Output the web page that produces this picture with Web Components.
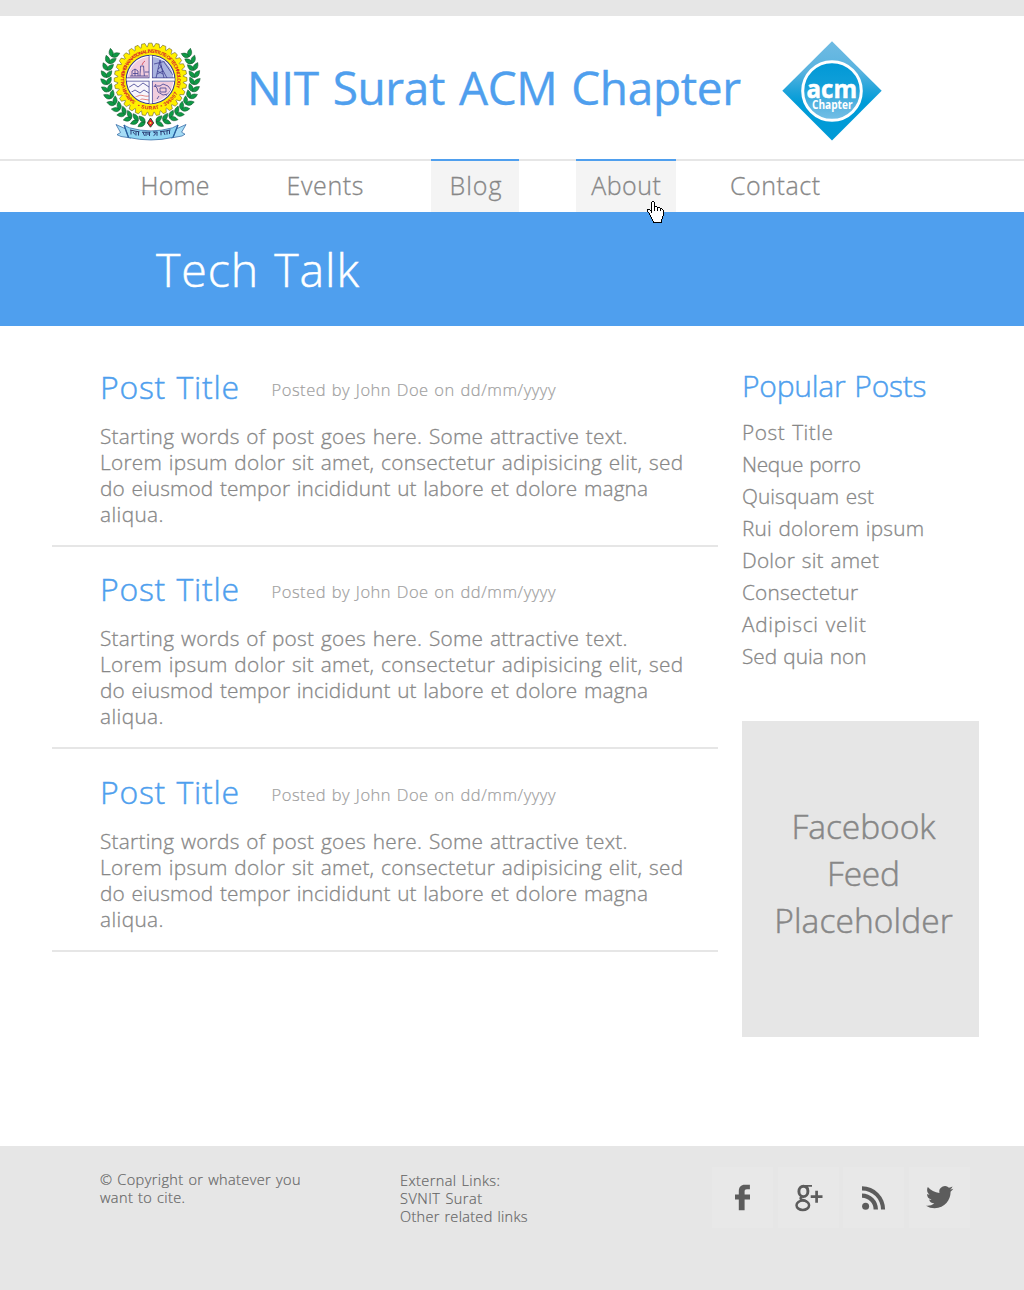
<!DOCTYPE html>
<html lang="en">
<head>
<meta charset="utf-8">
<title>NIT Surat ACM Chapter</title>
<style>
body{margin:0;background:#fff;font-family:"Open Sans","Noto Sans",sans-serif;font-weight:300;color:#878787}
</style>
</head>
<body>
<chapter-page></chapter-page>
<script>
// One line of text, tracked so that it fills the measure given in "w".
class FitLine extends HTMLElement{
  connectedCallback(){
    const a=n=>parseFloat(this.getAttribute(n));
    const root=this.attachShadow({mode:'open'});
    root.innerHTML=`<style>:host{display:block;flex:none;white-space:nowrap;width:${a('w')}px;height:${a('l')}px;line-height:${a('l')}px;font-size:${a('s')}px}
      span{display:inline-block;line-height:inherit;word-spacing:.05em;-webkit-text-stroke:var(--ink,.3px) currentColor}</style><span><slot></slot></span>`;
    const span=root.querySelector('span'),n=this.textContent.trim().length;
    const track=(a('w')-span.getBoundingClientRect().width)/(n-1);
    span.style.letterSpacing=track.toFixed(3)+'px';
  }
}
customElements.define('fit-line',FitLine);

const define=(name,markup)=>customElements.define(name,class extends HTMLElement{
  connectedCallback(){
    if(this.shadowRoot)return;
    const root=this.attachShadow({mode:'open'});
    root.innerHTML=typeof markup==='function'?markup(this):markup;
  }
});

// College crest: cog wheel, quartered disc, laurel and ribbon.
function crest(){
  const cx=60.6,cy=49.5;let gear='';
  const N=32;
  for(let i=0;i<N;i++){
    [[-.5,32.8],[-.27,36.4],[.2,36.4],[.42,32.8]].forEach(([d,r])=>{
      const t=(i+d)/N*2*Math.PI;gear+=`${(cx+r*Math.cos(t)).toFixed(2)},${(cy+r*Math.sin(t)).toFixed(2)} `;});
  }
  let leaves='';
  for(const side of [1,-1])for(let i=0;i<13;i++){
    const deg=97+i*9.3,t=deg*Math.PI/180;
    const x=cx+side*44*Math.cos(t),y=48+44.3*Math.sin(t);
    const dir=side===1?deg+90:90-deg;
    for(const k of [-38,38])
      leaves+=`<path d="M0 0Q3.200-4.600 8.600-.2Q3.500 3.900 0 0Z" transform="translate(${x.toFixed(1)} ${y.toFixed(1)}) rotate(${(dir+k).toFixed(1)})"/>`;
  }
  return `<style>:host{display:block;width:120px;height:120px}svg{display:block}</style>
  <svg width="120" height="120" viewBox="0 0 120 120">
  <defs><path id="up" d="M45.600 71.300A26.600 26.600 0 1 1 85.700 58.500"/><path id="dn" d="M45.500 75.500A30.200 30.200 0 0 0 89.200 59.500"/>
  <clipPath id="disc"><circle cx="${cx}" cy="49.500" r="22.800"/></clipPath></defs>
  <g fill="#0d9a45" stroke="#13502c" stroke-width=".5">${leaves}</g>
  <polygon points="${gear}" fill="#fff000" stroke="#5b5322" stroke-width=".55"/>
  <circle cx="${cx}" cy="49.500" r="24.300" fill="#fff" stroke="#3b3a8c" stroke-width="1.100"/>
  <g clip-path="url(#disc)">
    <path fill="#f1cddd" d="M37 27h22v21H37zM62.400 52H84v22H62.400z"/><path fill="#a9b3df" d="M62.400 27H84v21H62.400z"/><path fill="#f7f5fb" d="M37 52h22v22H37z"/>
    <g fill="none" stroke="#3f3f91" stroke-width=".8">
      <path d="M40 46h18M42 46V41l3-2 3 2v5M50 46c0-4 .6-6 .6-10h3c0 4 .7 6 .7 10M45 39v7M55 42h4M43 43.500h5"/>
      <path d="M52 35q1-3 3-4" stroke="#d13a4a"/>
      <path d="M66 48l4-18 4 18M67 44l6-3M68 39l4-3M67 41l6 3M64 34l12-3M69 33l8 15M74 32l9 13M77 30l7 10"/>
      <path d="M38 58l6-4 4 3 5-4 6 4M40 63l5-3 5 3 4-3 5 3"/>
      <path d="M38 66c4-2 6 2 10 0s6 1 11 0M41 69c5-2 7 2 11 0l7 1" stroke="#dc6b62"/>
      <path d="M65 56h5l3-2 5 2 3 4-3 4-5 1-5-3-1-4zM69 66l-2 3M76 65l3 4M70 58h6v4h-6zM66 54l-2 3"/>
    </g>
  </g>
  <path d="M60.700 26v47M37 49.500h47.200" stroke="#3f3f91" stroke-width="4"/><path d="M60.700 25.500v48M36.600 49.500h48" stroke="#fff" stroke-width="2.500"/>
  <g fill="#d6202c" font-family="Liberation Sans,sans-serif" font-weight="700" font-size="5">
    <text><textPath href="#up" textLength="117">SARDAR VALLABHBHAI NATIONAL INSTITUTE OF TECHNOLOGY</textPath></text>
    <text><textPath href="#dn" startOffset="2" textLength="47">• SURAT • 395007</textPath></text>
  </g>
  <path d="M60.500 88l3.200 5-3.200 4.200-3.200-4.200z" fill="#e2202a" stroke="#13502c" stroke-width=".9"/><circle cx="60.500" cy="93" r="1.100" fill="#f9e13b"/>
  <g stroke="#285f9e" stroke-width=".7" stroke-linejoin="round">
    <path d="M26 94.500l10 4.500 5 9-10-1.500-4-1.800 3.500-2.200z" fill="#a6dcf5"/><path d="M96 94.500l-10 4.500-5 9 11-2 3-1.800-3.400-2z" fill="#a6dcf5"/>
    <path d="M34 95q3 1.800 5.500 2.800Q61 104 82.500 97.800L88 95 83 107.400Q61 112.500 38.500 107.500z" fill="#8fd5f3"/>
    <path d="M34 95l4.500 12.500M88 95l-5 12.400" fill="none" stroke-width="1.300"/>
  </g>
  <g fill="none" stroke="#26346e" stroke-width=".95"><path d="M40 100q6 1.500 9.500 1.800M52 102.200h8.500M63 102h4.500M70 101.700q6-.500 10.500-1.800"/><path d="M41 100.500v4M43 102l2 2.500M46 101.500v4M48.500 102v3.600M53 102.200l1.500 3.600M56 102.200v3.800M59.500 102.200v3.800M57 104h2M64 102q3 2-.5 3.600M67 102v3.800M71 101.700v3.600M73.500 101.500l1.500 3.400M77 101v3.600M79.500 100.500v3.600"/></g>
  </svg>`;
}
define('college-crest',crest);

define('acm-logo',`<style>:host{display:block;width:124px;height:124px}svg{display:block}</style>
<svg width="124" height="124" viewBox="0 0 124 124">
<defs><linearGradient id="d" x2="0" y2="1"><stop offset="0" stop-color="#6fbbe3"/><stop offset=".3" stop-color="#5ab3df"/><stop offset=".5" stop-color="#1ea3da"/><stop offset=".62" stop-color="#009cd8"/><stop offset="1" stop-color="#009ad6"/></linearGradient>
<linearGradient id="c" x2="0" y2="1"><stop offset="0" stop-color="#0098d6"/><stop offset=".4" stop-color="#109fd9"/><stop offset=".75" stop-color="#5ab4e0"/><stop offset="1" stop-color="#74bfe6"/></linearGradient></defs>
<path d="M62 11.300l49.700 49.500L62 110.500 12.300 60.800z" fill="url(#d)"/>
<circle cx="62" cy="61" r="29.300" fill="url(#c)" stroke="#fff" stroke-width="3"/>
<g fill="#fff" font-family="Open Sans,sans-serif"><text x="36.600" y="68" font-size="25" font-weight="700" stroke="#fff" stroke-width=".5" textLength="50.500" lengthAdjust="spacingAndGlyphs">acm</text>
<text x="42" y="79" font-size="11.500" font-weight="700" textLength="40.500" lengthAdjust="spacingAndGlyphs">Chapter</text></g></svg>`);

// Pointing hand, one character per pixel.
define('hand-pointer',()=>{
  const rows=['.....XX','....X..X','....X..X','....X..X','....X..X','....X..XXX','....X..X..XXX','....X..X..X..XX','XXX.X..X..X..X.X','X..XX..X..X..X..X','X...X...........X','.X..X...........X','..X.............X','..X.............X','...X............X','...X...........X','....X..........X','....X..........X','.....X........X','.....X........X','......X.......X','......XXXXXXXXX'];
  let s='';
  rows.forEach((r,y)=>{
    const a=r.indexOf('X');
    s+=(y===8?`<path fill="#fff" d="M4 8h12v1H4z"/>`:`<path fill="#fff" d="M${a} ${y}h${r.length-a}v1H${a}z"/>`);
    [...r].forEach((c,x)=>{if(c==='X')s+=`<path d="M${x} ${y}h1v1h-1z"/>`});
  });
  return `<style>:host{display:block}svg{display:block}</style><svg width="17" height="22" shape-rendering="crispEdges">${s}</svg>`;
});

define('site-header',`<style>
:host{display:flex;box-sizing:border-box;height:159px;border-top:16px solid #e6e6e6;padding:14px 0 0 90px;align-items:flex-start}
fit-line{color:#4f9fee;font-weight:400;margin:25px 29px 0 37px;--ink:.4px}
</style><college-crest></college-crest><fit-line s="46" l="64" w="494">NIT Surat ACM Chapter</fit-line><acm-logo></acm-logo>`);

define('nav-tab',el=>`<style>
:host{display:flex;position:relative;box-sizing:border-box;flex:none;justify-content:center;height:53px;padding-top:9px;border-top:2px solid #e6e6e6}
:host([active]){border-top-color:#4f9fee;background:#f4f4f4}
hand-pointer{position:absolute;left:71px;top:40px;z-index:2}
</style><slot></slot>${el.hasAttribute('hover')?'<hand-pointer></hand-pointer>':''}`);

define('site-nav',`<style>
:host{display:flex;height:53px;background:linear-gradient(#e6e6e6 2px,#fff 2px);padding-left:131px}
.a{width:88px;margin-right:58px}.b{width:96px;margin-right:58px}.c{width:88px;margin-right:57px;padding-left:1px}.d{width:100px;margin-right:44px}.e{width:110px}
</style>
<nav-tab class="a"><fit-line s="25" l="31" w="69">Home</fit-line></nav-tab>
<nav-tab class="b"><fit-line s="25" l="31" w="77">Events</fit-line></nav-tab>
<nav-tab class="c" active><fit-line s="25" l="31" w="52">Blog</fit-line></nav-tab>
<nav-tab class="d" active hover><fit-line s="25" l="31" w="69.500">About</fit-line></nav-tab>
<nav-tab class="e"><fit-line s="25" l="31" w="90">Contact</fit-line></nav-tab>`);

define('page-banner',`<style>:host{display:block;box-sizing:border-box;height:114px;padding:25px 0 0 156px;background:#4f9fee;color:#fff;--ink:.5px}</style><fit-line s="46.500" l="64" w="203">Tech Talk</fit-line>`);

define('blog-post',`<style>
:host{display:block;padding:21px 0 18px 48px;border-bottom:2px solid #e6e6e6}
header{display:flex;height:42px;margin-bottom:15px}
.t{color:#4f9fee;margin-right:32.500px;--ink:.45px}.m{color:#a0a0a0;margin-top:3px;--ink:.2px}
</style><header><fit-line class="t" s="32" l="42" w="139">Post Title</fit-line><fit-line class="m" s="16.500" l="42" w="284">Posted by John Doe on dd/mm/yyyy</fit-line></header>
<fit-line s="20.800" l="26" w="527.500">Starting words of post goes here. Some attractive text.</fit-line>
<fit-line s="20.800" l="26" w="583">Lorem ipsum dolor sit amet, consectetur adipisicing elit, sed</fit-line>
<fit-line s="20.800" l="26" w="548">do eiusmod tempor incididunt ut labore et dolore magna</fit-line>
<fit-line s="20.800" l="26" w="63.500">aliqua.</fit-line>`);

define('feed-box',`<style>
:host{display:flex;flex-direction:column;align-items:center;box-sizing:border-box;width:237px;height:316px;padding:82px 0 0 6px;background:#e6e6e6;--ink:.5px}
</style><fit-line s="33.500" l="47" w="144">Facebook</fit-line><fit-line s="33.500" l="47" w="73">Feed</fit-line><fit-line s="33.500" l="47" w="178.500">Placeholder</fit-line>`);

const posts=[['Post Title',91],['Neque porro',119],['Quisquam est',132],['Rui dolorem ipsum',182],['Dolor sit amet',137],['Consectetur',116],['Adipisci velit',124],['Sed quia non',124.500]];
define('popular-posts',`<style>
:host{display:block;padding:39px 0 49px}.h{color:#4f9fee;margin:0 0 9px;--ink:.45px}
</style><fit-line class="h" s="30" l="42" w="184.500">Popular Posts</fit-line>
${posts.map(([t,w])=>`<fit-line s="20.800" l="32" w="${w}">${t}</fit-line>`).join('')}`);

const glyphs={
  facebook:'<path d="M26.800 45.300V34.400H23v-5h3.800v-3.200c0-4.300 2.200-6.500 6-6.500h5.100v4.600h-3c-1.600 0-2.300.8-2.300 2.300v2.800h5.400v5h-5.400v10.900z"/>',
  google:'<g fill="none" stroke="#5c5c5c"><ellipse cx="25.400" cy="26.400" rx="4.500" ry="5.200" stroke-width="2.900"/><ellipse cx="24.800" cy="40.300" rx="6.300" ry="4.700" stroke-width="2.500"/><path d="M24.500 31.500q-4 1.800-.5 3.100 3.500 1 4.500 1.900" stroke-width="2.300"/><path d="M26 20.900h8M28.400 21.500q2 1.200 1.900 4" stroke-width="1.900"/><path d="M32.700 31.700h11.800M38.600 25.800v12" stroke-width="2.700"/></g>',
  rss:'<circle cx="22.600" cy="41.300" r="3.500"/><path d="M19 28.500v4.300A11.700 11.700 0 0 1 30.600 44.600H35A16 16 0 0 0 19 28.500zM19 21.300v4.200A19 19 0 0 1 38 44.600h4.100A23.200 23.200 0 0 0 19 21.300z"/>',
  twitter:'<path transform="translate(17 18.500) scale(1.140)" d="M23.950 4.570a10 10 0 0 1-2.820.77 4.960 4.960 0 0 0 2.160-2.720c-.95.550-2 .950-3.130 1.180a4.920 4.920 0 0 0-8.380 4.480C7.690 8.090 4.070 6.130 1.640 3.160a4.820 4.820 0 0 0-.67 2.480c0 1.710.87 3.210 2.190 4.100a4.900 4.900 0 0 1-2.230-.62v.060a4.920 4.920 0 0 0 3.950 4.830 5 5 0 0 1-2.210.08 4.940 4.940 0 0 0 4.600 3.420A9.870 9.870 0 0 1 0 19.540a14 14 0 0 0 7.550 2.210c9.050 0 14-7.500 14-13.980 0-.21 0-.42-.02-.63a9.940 9.940 0 0 0 2.460-2.550z"/>'
};
define('social-link',el=>`<style>:host{display:block;width:61px;height:61px;background:#e8e8e8}svg{display:block;margin-top:-2px}:host{overflow:hidden}</style>
<svg width="61" height="61" viewBox="0 0 61 61" fill="#5c5c5c">${glyphs[el.getAttribute('kind')]}</svg>`);

define('site-footer',`<style>
:host{display:flex;align-items:flex-start;box-sizing:border-box;height:144px;padding:25px 0 0 100px;background:#e6e6e6;color:#666;--ink:.2px}
.c{width:300px}.l{width:312px;padding-top:1px}.s{display:flex;gap:4.500px;margin-top:-4px}
</style>
<div class="c"><fit-line s="14.500" l="18" w="200.500">© Copyright or whatever you</fit-line><fit-line s="14.500" l="18" w="85">want to cite.</fit-line></div>
<div class="l"><fit-line s="14.500" l="18" w="100">External Links:</fit-line><fit-line s="14.500" l="18" w="82">SVNIT Surat</fit-line><fit-line s="14.500" l="18" w="127.500">Other related links</fit-line></div>
<div class="s"><social-link kind="facebook"></social-link><social-link kind="google"></social-link><social-link kind="rss"></social-link><social-link kind="twitter"></social-link></div>`);

define('chapter-page',`<style>
:host{display:flex;flex-direction:column;width:1024px;height:1290px;overflow:hidden}
main{display:flex;gap:24px;height:820px;padding-left:52px}
.posts{width:666px}.first{padding-top:40px}.last{padding-top:22px}
</style>
<site-header></site-header><site-nav></site-nav><page-banner></page-banner>
<main><div class="posts"><blog-post class="first"></blog-post><blog-post></blog-post><blog-post class="last"></blog-post></div>
<aside><popular-posts></popular-posts><feed-box></feed-box></aside></main>
<site-footer></site-footer>`);
</script>
</body>
</html>
